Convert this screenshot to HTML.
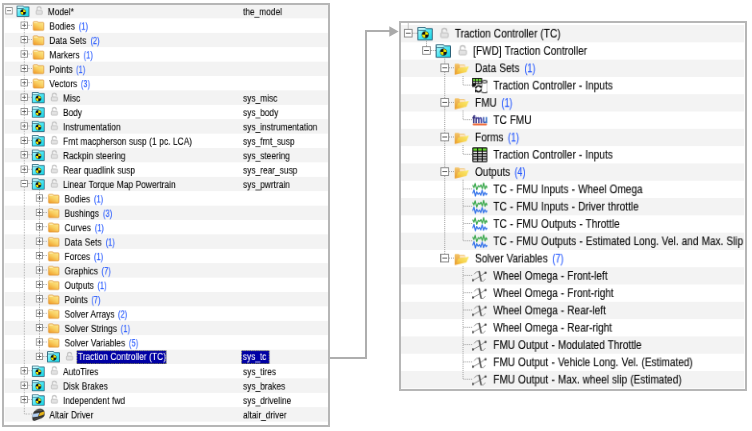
<!DOCTYPE html>
<html><head><meta charset="utf-8"><style>
html,body{margin:0;padding:0;background:#fff;width:752px;height:431px;overflow:hidden;position:relative}
.frame{position:absolute;border:2px solid #b6b6b6;box-sizing:border-box}
.panel{position:absolute;transform-origin:0 0;width:0;height:0;will-change:transform}
.rbg{position:absolute;height:18px;background:#f3f3f3}
.lines{position:absolute;left:0;top:0;overflow:visible}
.lines line{stroke:#9a9a9a;stroke-width:1;stroke-dasharray:1 1}
.box{position:absolute;width:7px;height:7px;border:1px solid #8a8a8a;background:#fff}
.box .h{position:absolute;left:1px;top:3px;width:5px;height:1px;background:#555}
.box .v{position:absolute;left:3px;top:1px;width:1px;height:5px;background:#555}
.icw{position:absolute;width:16px;height:16px}
.ic{display:block}
.tx{position:absolute;height:18px;white-space:nowrap;font-family:"Liberation Sans",sans-serif;font-size:12.2px;line-height:18px;color:#000;-webkit-text-stroke:0.1px #000;-webkit-font-smoothing:antialiased;word-spacing:0.4px}
.tx span{display:inline-block;transform:scaleX(0.857);transform-origin:0 0}
.cnt{color:#2a5cff;-webkit-text-stroke:0.25px #2a5cff;margin-left:1.8px;letter-spacing:0.3px}
.sel span{background:#0000a4;color:#fff;-webkit-text-stroke-color:#fff;outline:1px dotted #b0b040;outline-offset:-1px;padding:0 1px 0 2px;margin-left:-2px;line-height:17.6px;position:relative;top:-1px}
.selv span{padding-right:4px}
</style></head><body>
<svg width="0" height="0" style="position:absolute"><defs><linearGradient id="gcy" x1="0" y1="0" x2="1" y2="1"><stop offset="0" stop-color="#c4fbff"/><stop offset="0.5" stop-color="#50e8f4"/><stop offset="1" stop-color="#14cfe0"/></linearGradient><linearGradient id="gfo" x1="0.8" y1="0" x2="0.2" y2="1"><stop offset="0" stop-color="#fdea90"/><stop offset="0.5" stop-color="#f9d062"/><stop offset="1" stop-color="#f19e2c"/></linearGradient><linearGradient id="gfo2" x1="1" y1="0" x2="0" y2="1"><stop offset="0" stop-color="#fbec70"/><stop offset="0.55" stop-color="#f6d24e"/><stop offset="1" stop-color="#ef9a28"/></linearGradient><linearGradient id="gfb" x1="0" y1="0" x2="0" y2="1"><stop offset="0" stop-color="#f4c468"/><stop offset="1" stop-color="#e49a30"/></linearGradient></defs></svg>
<svg style="position:absolute;left:0;top:0" width="752" height="431"><path d="M330 358H366V31H390" fill="none" stroke="#aeaeae" stroke-width="2"/><path d="M389.3 26.2L398.6 31.5L389.3 36.8Z" fill="#aaaaaa"/></svg>
<div class="panel" style="left:3.2px;top:4px;transform:scale(0.8)">
<div class="rbg" style="top:0px;left:2.25px;width:403.25px"></div>
<div class="rbg" style="top:36px;left:2.25px;width:403.25px"></div>
<div class="rbg" style="top:72px;left:2.25px;width:403.25px"></div>
<div class="rbg" style="top:108px;left:2.25px;width:403.25px"></div>
<div class="rbg" style="top:144px;left:2.25px;width:403.25px"></div>
<div class="rbg" style="top:180px;left:2.25px;width:403.25px"></div>
<div class="rbg" style="top:216px;left:2.25px;width:403.25px"></div>
<div class="rbg" style="top:252px;left:2.25px;width:403.25px"></div>
<div class="rbg" style="top:288px;left:2.25px;width:403.25px"></div>
<div class="rbg" style="top:324px;left:2.25px;width:403.25px"></div>
<div class="rbg" style="top:360px;left:2.25px;width:403.25px"></div>
<div class="rbg" style="top:396px;left:2.25px;width:403.25px"></div>
<div class="rbg" style="top:432px;left:2.25px;width:403.25px"></div>
<div class="rbg" style="top:468px;left:2.25px;width:403.25px"></div>
<div class="rbg" style="top:504px;left:2.25px;width:403.25px"></div>
<svg class="lines" width="420" height="542"><line x1="26.5" y1="17" x2="26.5" y2="512"/><line x1="31" y1="26.5" x2="36" y2="26.5"/><line x1="31" y1="44.5" x2="36" y2="44.5"/><line x1="31" y1="62.5" x2="36" y2="62.5"/><line x1="31" y1="80.5" x2="36" y2="80.5"/><line x1="31" y1="98.5" x2="36" y2="98.5"/><line x1="31" y1="116.5" x2="36" y2="116.5"/><line x1="31" y1="134.5" x2="36" y2="134.5"/><line x1="31" y1="152.5" x2="36" y2="152.5"/><line x1="31" y1="170.5" x2="36" y2="170.5"/><line x1="31" y1="188.5" x2="36" y2="188.5"/><line x1="31" y1="206.5" x2="36" y2="206.5"/><line x1="31" y1="224.5" x2="36" y2="224.5"/><line x1="45.5" y1="233" x2="45.5" y2="440"/><line x1="50" y1="242.5" x2="55" y2="242.5"/><line x1="50" y1="260.5" x2="55" y2="260.5"/><line x1="50" y1="278.5" x2="55" y2="278.5"/><line x1="50" y1="296.5" x2="55" y2="296.5"/><line x1="50" y1="314.5" x2="55" y2="314.5"/><line x1="50" y1="332.5" x2="55" y2="332.5"/><line x1="50" y1="350.5" x2="55" y2="350.5"/><line x1="50" y1="368.5" x2="55" y2="368.5"/><line x1="50" y1="386.5" x2="55" y2="386.5"/><line x1="50" y1="404.5" x2="55" y2="404.5"/><line x1="50" y1="422.5" x2="55" y2="422.5"/><line x1="50" y1="440.5" x2="55" y2="440.5"/><line x1="31" y1="458.5" x2="36" y2="458.5"/><line x1="31" y1="476.5" x2="36" y2="476.5"/><line x1="31" y1="494.5" x2="36" y2="494.5"/><line x1="27" y1="512.5" x2="36" y2="512.5"/></svg>
<div class="box" style="left:3px;top:3.5px"><i class="h"></i></div>
<div class="icw" style="left:17px;top:1px"><svg class="ic" width="16" height="16" viewBox="0 0 16 16"><path d="M0.5 14.6V1.6H8.3L9.3 2.8H15.5V14.6Z" fill="url(#gcy)" stroke="#2a6078" stroke-width="1"/><path d="M1.2 4.5H8.8" stroke="#3a7088" stroke-width="0.9"/><path d="M1.5 2.9H7.8" stroke="#e6ffff" stroke-width="1.1"/><circle cx="8.2" cy="9.1" r="3.6" fill="#151515"/><path d="M8.2 9.1V5.9A3.2 3.2 0 0 1 11.4 9.1Z M8.2 9.1V12.3A3.2 3.2 0 0 1 5 9.1Z" fill="#f6e800"/></svg></div>
<div class="icw" style="left:37px;top:1px"><svg class="ic" width="16" height="16" viewBox="0 0 16 16"><path d="M5.6 7.2V5A2.5 2.5 0 0 1 10.6 5V5.6" fill="none" stroke="#c2c2c2" stroke-width="1.4"/><rect x="4.3" y="7.1" width="7.8" height="4.9" rx="0.9" fill="#e2e2e2" stroke="#c0c0c0" stroke-width="1"/></svg></div>
<div class="tx" style="left:55.7px;top:0.7px"><span>Model*</span></div>
<div class="tx" style="left:300.175px;top:0.7px"><span>the_model</span></div>
<div class="box" style="left:22px;top:21.5px"><i class="h"></i><i class="v"></i></div>
<div class="icw" style="left:36px;top:19px"><svg class="ic" width="16" height="16" viewBox="0 0 16 16"><path d="M1.9 13.1V3.8Q1.9 2.9 2.8 2.9H7.3L8.3 4H14Q14.9 4 14.9 4.9V13.1Q14.9 14 14 14H2.8Q1.9 14 1.9 13.1Z" fill="url(#gfo)" stroke="#e0963a" stroke-width="0.9"/><path d="M2.7 4.2H7.2" stroke="#fff4cc" stroke-width="1"/></svg></div>
<div class="tx" style="left:58.2px;top:18.7px"><span>Bodies <span class="cnt">(1)</span></span></div>
<div class="box" style="left:22px;top:39.5px"><i class="h"></i><i class="v"></i></div>
<div class="icw" style="left:36px;top:37px"><svg class="ic" width="16" height="16" viewBox="0 0 16 16"><path d="M1.9 13.1V3.8Q1.9 2.9 2.8 2.9H7.3L8.3 4H14Q14.9 4 14.9 4.9V13.1Q14.9 14 14 14H2.8Q1.9 14 1.9 13.1Z" fill="url(#gfo)" stroke="#e0963a" stroke-width="0.9"/><path d="M2.7 4.2H7.2" stroke="#fff4cc" stroke-width="1"/></svg></div>
<div class="tx" style="left:58.2px;top:36.7px"><span>Data Sets <span class="cnt">(2)</span></span></div>
<div class="box" style="left:22px;top:57.5px"><i class="h"></i><i class="v"></i></div>
<div class="icw" style="left:36px;top:55px"><svg class="ic" width="16" height="16" viewBox="0 0 16 16"><path d="M1.9 13.1V3.8Q1.9 2.9 2.8 2.9H7.3L8.3 4H14Q14.9 4 14.9 4.9V13.1Q14.9 14 14 14H2.8Q1.9 14 1.9 13.1Z" fill="url(#gfo)" stroke="#e0963a" stroke-width="0.9"/><path d="M2.7 4.2H7.2" stroke="#fff4cc" stroke-width="1"/></svg></div>
<div class="tx" style="left:58.2px;top:54.7px"><span>Markers <span class="cnt">(1)</span></span></div>
<div class="box" style="left:22px;top:75.5px"><i class="h"></i><i class="v"></i></div>
<div class="icw" style="left:36px;top:73px"><svg class="ic" width="16" height="16" viewBox="0 0 16 16"><path d="M1.9 13.1V3.8Q1.9 2.9 2.8 2.9H7.3L8.3 4H14Q14.9 4 14.9 4.9V13.1Q14.9 14 14 14H2.8Q1.9 14 1.9 13.1Z" fill="url(#gfo)" stroke="#e0963a" stroke-width="0.9"/><path d="M2.7 4.2H7.2" stroke="#fff4cc" stroke-width="1"/></svg></div>
<div class="tx" style="left:58.2px;top:72.7px"><span>Points <span class="cnt">(1)</span></span></div>
<div class="box" style="left:22px;top:93.5px"><i class="h"></i><i class="v"></i></div>
<div class="icw" style="left:36px;top:91px"><svg class="ic" width="16" height="16" viewBox="0 0 16 16"><path d="M1.9 13.1V3.8Q1.9 2.9 2.8 2.9H7.3L8.3 4H14Q14.9 4 14.9 4.9V13.1Q14.9 14 14 14H2.8Q1.9 14 1.9 13.1Z" fill="url(#gfo)" stroke="#e0963a" stroke-width="0.9"/><path d="M2.7 4.2H7.2" stroke="#fff4cc" stroke-width="1"/></svg></div>
<div class="tx" style="left:58.2px;top:90.7px"><span>Vectors <span class="cnt">(3)</span></span></div>
<div class="box" style="left:22px;top:111.5px"><i class="h"></i><i class="v"></i></div>
<div class="icw" style="left:36px;top:109px"><svg class="ic" width="16" height="16" viewBox="0 0 16 16"><path d="M0.5 14.6V1.6H8.3L9.3 2.8H15.5V14.6Z" fill="url(#gcy)" stroke="#2a6078" stroke-width="1"/><path d="M1.2 4.5H8.8" stroke="#3a7088" stroke-width="0.9"/><path d="M1.5 2.9H7.8" stroke="#e6ffff" stroke-width="1.1"/><circle cx="8.2" cy="9.1" r="3.6" fill="#151515"/><path d="M8.2 9.1V5.9A3.2 3.2 0 0 1 11.4 9.1Z M8.2 9.1V12.3A3.2 3.2 0 0 1 5 9.1Z" fill="#f6e800"/></svg></div>
<div class="icw" style="left:56px;top:109px"><svg class="ic" width="16" height="16" viewBox="0 0 16 16"><path d="M5.6 7.2V5A2.5 2.5 0 0 1 10.6 5V5.6" fill="none" stroke="#c2c2c2" stroke-width="1.4"/><rect x="4.3" y="7.1" width="7.8" height="4.9" rx="0.9" fill="#e2e2e2" stroke="#c0c0c0" stroke-width="1"/></svg></div>
<div class="tx" style="left:74.7px;top:108.7px"><span>Misc</span></div>
<div class="tx" style="left:300.175px;top:108.7px"><span>sys_misc</span></div>
<div class="box" style="left:22px;top:129.5px"><i class="h"></i><i class="v"></i></div>
<div class="icw" style="left:36px;top:127px"><svg class="ic" width="16" height="16" viewBox="0 0 16 16"><path d="M0.5 14.6V1.6H8.3L9.3 2.8H15.5V14.6Z" fill="url(#gcy)" stroke="#2a6078" stroke-width="1"/><path d="M1.2 4.5H8.8" stroke="#3a7088" stroke-width="0.9"/><path d="M1.5 2.9H7.8" stroke="#e6ffff" stroke-width="1.1"/><circle cx="8.2" cy="9.1" r="3.6" fill="#151515"/><path d="M8.2 9.1V5.9A3.2 3.2 0 0 1 11.4 9.1Z M8.2 9.1V12.3A3.2 3.2 0 0 1 5 9.1Z" fill="#f6e800"/></svg></div>
<div class="icw" style="left:56px;top:127px"><svg class="ic" width="16" height="16" viewBox="0 0 16 16"><path d="M5.6 7.2V5A2.5 2.5 0 0 1 10.6 5V5.6" fill="none" stroke="#c2c2c2" stroke-width="1.4"/><rect x="4.3" y="7.1" width="7.8" height="4.9" rx="0.9" fill="#e2e2e2" stroke="#c0c0c0" stroke-width="1"/></svg></div>
<div class="tx" style="left:74.7px;top:126.7px"><span>Body</span></div>
<div class="tx" style="left:300.175px;top:126.7px"><span>sys_body</span></div>
<div class="box" style="left:22px;top:147.5px"><i class="h"></i><i class="v"></i></div>
<div class="icw" style="left:36px;top:145px"><svg class="ic" width="16" height="16" viewBox="0 0 16 16"><path d="M0.5 14.6V1.6H8.3L9.3 2.8H15.5V14.6Z" fill="url(#gcy)" stroke="#2a6078" stroke-width="1"/><path d="M1.2 4.5H8.8" stroke="#3a7088" stroke-width="0.9"/><path d="M1.5 2.9H7.8" stroke="#e6ffff" stroke-width="1.1"/><circle cx="8.2" cy="9.1" r="3.6" fill="#151515"/><path d="M8.2 9.1V5.9A3.2 3.2 0 0 1 11.4 9.1Z M8.2 9.1V12.3A3.2 3.2 0 0 1 5 9.1Z" fill="#f6e800"/></svg></div>
<div class="icw" style="left:56px;top:145px"><svg class="ic" width="16" height="16" viewBox="0 0 16 16"><path d="M5.6 7.2V5A2.5 2.5 0 0 1 10.6 5V5.6" fill="none" stroke="#c2c2c2" stroke-width="1.4"/><rect x="4.3" y="7.1" width="7.8" height="4.9" rx="0.9" fill="#e2e2e2" stroke="#c0c0c0" stroke-width="1"/></svg></div>
<div class="tx" style="left:74.7px;top:144.7px"><span>Instrumentation</span></div>
<div class="tx" style="left:300.175px;top:144.7px"><span>sys_instrumentation</span></div>
<div class="box" style="left:22px;top:165.5px"><i class="h"></i><i class="v"></i></div>
<div class="icw" style="left:36px;top:163px"><svg class="ic" width="16" height="16" viewBox="0 0 16 16"><path d="M0.5 14.6V1.6H8.3L9.3 2.8H15.5V14.6Z" fill="url(#gcy)" stroke="#2a6078" stroke-width="1"/><path d="M1.2 4.5H8.8" stroke="#3a7088" stroke-width="0.9"/><path d="M1.5 2.9H7.8" stroke="#e6ffff" stroke-width="1.1"/><circle cx="8.2" cy="9.1" r="3.6" fill="#151515"/><path d="M8.2 9.1V5.9A3.2 3.2 0 0 1 11.4 9.1Z M8.2 9.1V12.3A3.2 3.2 0 0 1 5 9.1Z" fill="#f6e800"/></svg></div>
<div class="icw" style="left:56px;top:163px"><svg class="ic" width="16" height="16" viewBox="0 0 16 16"><path d="M5.6 7.2V5A2.5 2.5 0 0 1 10.6 5V5.6" fill="none" stroke="#c2c2c2" stroke-width="1.4"/><rect x="4.3" y="7.1" width="7.8" height="4.9" rx="0.9" fill="#e2e2e2" stroke="#c0c0c0" stroke-width="1"/></svg></div>
<div class="tx" style="left:74.7px;top:162.7px"><span>Frnt macpherson susp (1 pc. LCA)</span></div>
<div class="tx" style="left:300.175px;top:162.7px"><span>sys_frnt_susp</span></div>
<div class="box" style="left:22px;top:183.5px"><i class="h"></i><i class="v"></i></div>
<div class="icw" style="left:36px;top:181px"><svg class="ic" width="16" height="16" viewBox="0 0 16 16"><path d="M0.5 14.6V1.6H8.3L9.3 2.8H15.5V14.6Z" fill="url(#gcy)" stroke="#2a6078" stroke-width="1"/><path d="M1.2 4.5H8.8" stroke="#3a7088" stroke-width="0.9"/><path d="M1.5 2.9H7.8" stroke="#e6ffff" stroke-width="1.1"/><circle cx="8.2" cy="9.1" r="3.6" fill="#151515"/><path d="M8.2 9.1V5.9A3.2 3.2 0 0 1 11.4 9.1Z M8.2 9.1V12.3A3.2 3.2 0 0 1 5 9.1Z" fill="#f6e800"/></svg></div>
<div class="icw" style="left:56px;top:181px"><svg class="ic" width="16" height="16" viewBox="0 0 16 16"><path d="M5.6 7.2V5A2.5 2.5 0 0 1 10.6 5V5.6" fill="none" stroke="#c2c2c2" stroke-width="1.4"/><rect x="4.3" y="7.1" width="7.8" height="4.9" rx="0.9" fill="#e2e2e2" stroke="#c0c0c0" stroke-width="1"/></svg></div>
<div class="tx" style="left:74.7px;top:180.7px"><span>Rackpin steering</span></div>
<div class="tx" style="left:300.175px;top:180.7px"><span>sys_steering</span></div>
<div class="box" style="left:22px;top:201.5px"><i class="h"></i><i class="v"></i></div>
<div class="icw" style="left:36px;top:199px"><svg class="ic" width="16" height="16" viewBox="0 0 16 16"><path d="M0.5 14.6V1.6H8.3L9.3 2.8H15.5V14.6Z" fill="url(#gcy)" stroke="#2a6078" stroke-width="1"/><path d="M1.2 4.5H8.8" stroke="#3a7088" stroke-width="0.9"/><path d="M1.5 2.9H7.8" stroke="#e6ffff" stroke-width="1.1"/><circle cx="8.2" cy="9.1" r="3.6" fill="#151515"/><path d="M8.2 9.1V5.9A3.2 3.2 0 0 1 11.4 9.1Z M8.2 9.1V12.3A3.2 3.2 0 0 1 5 9.1Z" fill="#f6e800"/></svg></div>
<div class="icw" style="left:56px;top:199px"><svg class="ic" width="16" height="16" viewBox="0 0 16 16"><path d="M5.6 7.2V5A2.5 2.5 0 0 1 10.6 5V5.6" fill="none" stroke="#c2c2c2" stroke-width="1.4"/><rect x="4.3" y="7.1" width="7.8" height="4.9" rx="0.9" fill="#e2e2e2" stroke="#c0c0c0" stroke-width="1"/></svg></div>
<div class="tx" style="left:74.7px;top:198.7px"><span>Rear quadlink susp</span></div>
<div class="tx" style="left:300.175px;top:198.7px"><span>sys_rear_susp</span></div>
<div class="box" style="left:22px;top:219.5px"><i class="h"></i></div>
<div class="icw" style="left:36px;top:217px"><svg class="ic" width="16" height="16" viewBox="0 0 16 16"><path d="M0.5 14.6V1.6H8.3L9.3 2.8H15.5V14.6Z" fill="url(#gcy)" stroke="#2a6078" stroke-width="1"/><path d="M1.2 4.5H8.8" stroke="#3a7088" stroke-width="0.9"/><path d="M1.5 2.9H7.8" stroke="#e6ffff" stroke-width="1.1"/><circle cx="8.2" cy="9.1" r="3.6" fill="#151515"/><path d="M8.2 9.1V5.9A3.2 3.2 0 0 1 11.4 9.1Z M8.2 9.1V12.3A3.2 3.2 0 0 1 5 9.1Z" fill="#f6e800"/></svg></div>
<div class="icw" style="left:56px;top:217px"><svg class="ic" width="16" height="16" viewBox="0 0 16 16"><path d="M5.6 7.2V5A2.5 2.5 0 0 1 10.6 5V5.6" fill="none" stroke="#c2c2c2" stroke-width="1.4"/><rect x="4.3" y="7.1" width="7.8" height="4.9" rx="0.9" fill="#e2e2e2" stroke="#c0c0c0" stroke-width="1"/></svg></div>
<div class="tx" style="left:74.7px;top:216.7px"><span>Linear Torque Map Powertrain</span></div>
<div class="tx" style="left:300.175px;top:216.7px"><span>sys_pwrtrain</span></div>
<div class="box" style="left:41px;top:237.5px"><i class="h"></i><i class="v"></i></div>
<div class="icw" style="left:55px;top:235px"><svg class="ic" width="16" height="16" viewBox="0 0 16 16"><path d="M1.9 13.1V3.8Q1.9 2.9 2.8 2.9H7.3L8.3 4H14Q14.9 4 14.9 4.9V13.1Q14.9 14 14 14H2.8Q1.9 14 1.9 13.1Z" fill="url(#gfo)" stroke="#e0963a" stroke-width="0.9"/><path d="M2.7 4.2H7.2" stroke="#fff4cc" stroke-width="1"/></svg></div>
<div class="tx" style="left:77.2px;top:234.7px"><span>Bodies <span class="cnt">(1)</span></span></div>
<div class="box" style="left:41px;top:255.5px"><i class="h"></i><i class="v"></i></div>
<div class="icw" style="left:55px;top:253px"><svg class="ic" width="16" height="16" viewBox="0 0 16 16"><path d="M1.9 13.1V3.8Q1.9 2.9 2.8 2.9H7.3L8.3 4H14Q14.9 4 14.9 4.9V13.1Q14.9 14 14 14H2.8Q1.9 14 1.9 13.1Z" fill="url(#gfo)" stroke="#e0963a" stroke-width="0.9"/><path d="M2.7 4.2H7.2" stroke="#fff4cc" stroke-width="1"/></svg></div>
<div class="tx" style="left:77.2px;top:252.7px"><span>Bushings <span class="cnt">(3)</span></span></div>
<div class="box" style="left:41px;top:273.5px"><i class="h"></i><i class="v"></i></div>
<div class="icw" style="left:55px;top:271px"><svg class="ic" width="16" height="16" viewBox="0 0 16 16"><path d="M1.9 13.1V3.8Q1.9 2.9 2.8 2.9H7.3L8.3 4H14Q14.9 4 14.9 4.9V13.1Q14.9 14 14 14H2.8Q1.9 14 1.9 13.1Z" fill="url(#gfo)" stroke="#e0963a" stroke-width="0.9"/><path d="M2.7 4.2H7.2" stroke="#fff4cc" stroke-width="1"/></svg></div>
<div class="tx" style="left:77.2px;top:270.7px"><span>Curves <span class="cnt">(1)</span></span></div>
<div class="box" style="left:41px;top:291.5px"><i class="h"></i><i class="v"></i></div>
<div class="icw" style="left:55px;top:289px"><svg class="ic" width="16" height="16" viewBox="0 0 16 16"><path d="M1.9 13.1V3.8Q1.9 2.9 2.8 2.9H7.3L8.3 4H14Q14.9 4 14.9 4.9V13.1Q14.9 14 14 14H2.8Q1.9 14 1.9 13.1Z" fill="url(#gfo)" stroke="#e0963a" stroke-width="0.9"/><path d="M2.7 4.2H7.2" stroke="#fff4cc" stroke-width="1"/></svg></div>
<div class="tx" style="left:77.2px;top:288.7px"><span>Data Sets <span class="cnt">(1)</span></span></div>
<div class="box" style="left:41px;top:309.5px"><i class="h"></i><i class="v"></i></div>
<div class="icw" style="left:55px;top:307px"><svg class="ic" width="16" height="16" viewBox="0 0 16 16"><path d="M1.9 13.1V3.8Q1.9 2.9 2.8 2.9H7.3L8.3 4H14Q14.9 4 14.9 4.9V13.1Q14.9 14 14 14H2.8Q1.9 14 1.9 13.1Z" fill="url(#gfo)" stroke="#e0963a" stroke-width="0.9"/><path d="M2.7 4.2H7.2" stroke="#fff4cc" stroke-width="1"/></svg></div>
<div class="tx" style="left:77.2px;top:306.7px"><span>Forces <span class="cnt">(1)</span></span></div>
<div class="box" style="left:41px;top:327.5px"><i class="h"></i><i class="v"></i></div>
<div class="icw" style="left:55px;top:325px"><svg class="ic" width="16" height="16" viewBox="0 0 16 16"><path d="M1.9 13.1V3.8Q1.9 2.9 2.8 2.9H7.3L8.3 4H14Q14.9 4 14.9 4.9V13.1Q14.9 14 14 14H2.8Q1.9 14 1.9 13.1Z" fill="url(#gfo)" stroke="#e0963a" stroke-width="0.9"/><path d="M2.7 4.2H7.2" stroke="#fff4cc" stroke-width="1"/></svg></div>
<div class="tx" style="left:77.2px;top:324.7px"><span>Graphics <span class="cnt">(7)</span></span></div>
<div class="box" style="left:41px;top:345.5px"><i class="h"></i><i class="v"></i></div>
<div class="icw" style="left:55px;top:343px"><svg class="ic" width="16" height="16" viewBox="0 0 16 16"><path d="M1.9 13.1V3.8Q1.9 2.9 2.8 2.9H7.3L8.3 4H14Q14.9 4 14.9 4.9V13.1Q14.9 14 14 14H2.8Q1.9 14 1.9 13.1Z" fill="url(#gfo)" stroke="#e0963a" stroke-width="0.9"/><path d="M2.7 4.2H7.2" stroke="#fff4cc" stroke-width="1"/></svg></div>
<div class="tx" style="left:77.2px;top:342.7px"><span>Outputs <span class="cnt">(1)</span></span></div>
<div class="box" style="left:41px;top:363.5px"><i class="h"></i><i class="v"></i></div>
<div class="icw" style="left:55px;top:361px"><svg class="ic" width="16" height="16" viewBox="0 0 16 16"><path d="M1.9 13.1V3.8Q1.9 2.9 2.8 2.9H7.3L8.3 4H14Q14.9 4 14.9 4.9V13.1Q14.9 14 14 14H2.8Q1.9 14 1.9 13.1Z" fill="url(#gfo)" stroke="#e0963a" stroke-width="0.9"/><path d="M2.7 4.2H7.2" stroke="#fff4cc" stroke-width="1"/></svg></div>
<div class="tx" style="left:77.2px;top:360.7px"><span>Points <span class="cnt">(7)</span></span></div>
<div class="box" style="left:41px;top:381.5px"><i class="h"></i><i class="v"></i></div>
<div class="icw" style="left:55px;top:379px"><svg class="ic" width="16" height="16" viewBox="0 0 16 16"><path d="M1.9 13.1V3.8Q1.9 2.9 2.8 2.9H7.3L8.3 4H14Q14.9 4 14.9 4.9V13.1Q14.9 14 14 14H2.8Q1.9 14 1.9 13.1Z" fill="url(#gfo)" stroke="#e0963a" stroke-width="0.9"/><path d="M2.7 4.2H7.2" stroke="#fff4cc" stroke-width="1"/></svg></div>
<div class="tx" style="left:77.2px;top:378.7px"><span>Solver Arrays <span class="cnt">(2)</span></span></div>
<div class="box" style="left:41px;top:399.5px"><i class="h"></i><i class="v"></i></div>
<div class="icw" style="left:55px;top:397px"><svg class="ic" width="16" height="16" viewBox="0 0 16 16"><path d="M1.9 13.1V3.8Q1.9 2.9 2.8 2.9H7.3L8.3 4H14Q14.9 4 14.9 4.9V13.1Q14.9 14 14 14H2.8Q1.9 14 1.9 13.1Z" fill="url(#gfo)" stroke="#e0963a" stroke-width="0.9"/><path d="M2.7 4.2H7.2" stroke="#fff4cc" stroke-width="1"/></svg></div>
<div class="tx" style="left:77.2px;top:396.7px"><span>Solver Strings <span class="cnt">(1)</span></span></div>
<div class="box" style="left:41px;top:417.5px"><i class="h"></i><i class="v"></i></div>
<div class="icw" style="left:55px;top:415px"><svg class="ic" width="16" height="16" viewBox="0 0 16 16"><path d="M1.9 13.1V3.8Q1.9 2.9 2.8 2.9H7.3L8.3 4H14Q14.9 4 14.9 4.9V13.1Q14.9 14 14 14H2.8Q1.9 14 1.9 13.1Z" fill="url(#gfo)" stroke="#e0963a" stroke-width="0.9"/><path d="M2.7 4.2H7.2" stroke="#fff4cc" stroke-width="1"/></svg></div>
<div class="tx" style="left:77.2px;top:414.7px"><span>Solver Variables <span class="cnt">(5)</span></span></div>
<div class="box" style="left:41px;top:435.5px"><i class="h"></i><i class="v"></i></div>
<div class="icw" style="left:55px;top:433px"><svg class="ic" width="16" height="16" viewBox="0 0 16 16"><path d="M0.5 14.6V1.6H8.3L9.3 2.8H15.5V14.6Z" fill="url(#gcy)" stroke="#2a6078" stroke-width="1"/><path d="M1.2 4.5H8.8" stroke="#3a7088" stroke-width="0.9"/><path d="M1.5 2.9H7.8" stroke="#e6ffff" stroke-width="1.1"/><circle cx="8.2" cy="9.1" r="3.6" fill="#151515"/><path d="M8.2 9.1V5.9A3.2 3.2 0 0 1 11.4 9.1Z M8.2 9.1V12.3A3.2 3.2 0 0 1 5 9.1Z" fill="#f6e800"/></svg></div>
<div class="icw" style="left:75px;top:433px"><svg class="ic" width="16" height="16" viewBox="0 0 16 16"><path d="M5.6 7.2V5A2.5 2.5 0 0 1 10.6 5V5.6" fill="none" stroke="#c2c2c2" stroke-width="1.4"/><rect x="4.3" y="7.1" width="7.8" height="4.9" rx="0.9" fill="#e2e2e2" stroke="#c0c0c0" stroke-width="1"/></svg></div>
<div class="tx sel" style="left:93.7px;top:432.7px"><span>Traction Controller (TC)</span></div>
<div class="tx sel selv" style="left:300.175px;top:432.7px"><span>sys_tc</span></div>
<div class="box" style="left:22px;top:453.5px"><i class="h"></i><i class="v"></i></div>
<div class="icw" style="left:36px;top:451px"><svg class="ic" width="16" height="16" viewBox="0 0 16 16"><path d="M0.5 14.6V1.6H8.3L9.3 2.8H15.5V14.6Z" fill="url(#gcy)" stroke="#2a6078" stroke-width="1"/><path d="M1.2 4.5H8.8" stroke="#3a7088" stroke-width="0.9"/><path d="M1.5 2.9H7.8" stroke="#e6ffff" stroke-width="1.1"/><circle cx="8.2" cy="9.1" r="3.6" fill="#151515"/><path d="M8.2 9.1V5.9A3.2 3.2 0 0 1 11.4 9.1Z M8.2 9.1V12.3A3.2 3.2 0 0 1 5 9.1Z" fill="#f6e800"/></svg></div>
<div class="icw" style="left:56px;top:451px"><svg class="ic" width="16" height="16" viewBox="0 0 16 16"><path d="M5.6 7.2V5A2.5 2.5 0 0 1 10.6 5V5.6" fill="none" stroke="#c2c2c2" stroke-width="1.4"/><rect x="4.3" y="7.1" width="7.8" height="4.9" rx="0.9" fill="#e2e2e2" stroke="#c0c0c0" stroke-width="1"/></svg></div>
<div class="tx" style="left:74.7px;top:450.7px"><span>AutoTires</span></div>
<div class="tx" style="left:300.175px;top:450.7px"><span>sys_tires</span></div>
<div class="box" style="left:22px;top:471.5px"><i class="h"></i><i class="v"></i></div>
<div class="icw" style="left:36px;top:469px"><svg class="ic" width="16" height="16" viewBox="0 0 16 16"><path d="M0.5 14.6V1.6H8.3L9.3 2.8H15.5V14.6Z" fill="url(#gcy)" stroke="#2a6078" stroke-width="1"/><path d="M1.2 4.5H8.8" stroke="#3a7088" stroke-width="0.9"/><path d="M1.5 2.9H7.8" stroke="#e6ffff" stroke-width="1.1"/><circle cx="8.2" cy="9.1" r="3.6" fill="#151515"/><path d="M8.2 9.1V5.9A3.2 3.2 0 0 1 11.4 9.1Z M8.2 9.1V12.3A3.2 3.2 0 0 1 5 9.1Z" fill="#f6e800"/></svg></div>
<div class="icw" style="left:56px;top:469px"><svg class="ic" width="16" height="16" viewBox="0 0 16 16"><path d="M5.6 7.2V5A2.5 2.5 0 0 1 10.6 5V5.6" fill="none" stroke="#c2c2c2" stroke-width="1.4"/><rect x="4.3" y="7.1" width="7.8" height="4.9" rx="0.9" fill="#e2e2e2" stroke="#c0c0c0" stroke-width="1"/></svg></div>
<div class="tx" style="left:74.7px;top:468.7px"><span>Disk Brakes</span></div>
<div class="tx" style="left:300.175px;top:468.7px"><span>sys_brakes</span></div>
<div class="box" style="left:22px;top:489.5px"><i class="h"></i><i class="v"></i></div>
<div class="icw" style="left:36px;top:487px"><svg class="ic" width="16" height="16" viewBox="0 0 16 16"><path d="M0.5 14.6V1.6H8.3L9.3 2.8H15.5V14.6Z" fill="url(#gcy)" stroke="#2a6078" stroke-width="1"/><path d="M1.2 4.5H8.8" stroke="#3a7088" stroke-width="0.9"/><path d="M1.5 2.9H7.8" stroke="#e6ffff" stroke-width="1.1"/><circle cx="8.2" cy="9.1" r="3.6" fill="#151515"/><path d="M8.2 9.1V5.9A3.2 3.2 0 0 1 11.4 9.1Z M8.2 9.1V12.3A3.2 3.2 0 0 1 5 9.1Z" fill="#f6e800"/></svg></div>
<div class="icw" style="left:56px;top:487px"><svg class="ic" width="16" height="16" viewBox="0 0 16 16"><path d="M5.6 7.2V5A2.5 2.5 0 0 1 10.6 5V5.6" fill="none" stroke="#c2c2c2" stroke-width="1.4"/><rect x="4.3" y="7.1" width="7.8" height="4.9" rx="0.9" fill="#e2e2e2" stroke="#c0c0c0" stroke-width="1"/></svg></div>
<div class="tx" style="left:74.7px;top:486.7px"><span>Independent fwd</span></div>
<div class="tx" style="left:300.175px;top:486.7px"><span>sys_driveline</span></div>
<div class="icw" style="left:36px;top:505px"><svg class="ic" width="16" height="16" viewBox="0 0 16 16"><path d="M1 15Q-0.5 9 2.5 5Q6 0.3 11 0.8Q16.2 1.8 16.3 7.5Q16 11.5 12 13L4.2 15.8Q2 16.3 1 15Z" fill="#333"/><path d="M1.2 7.4L9.4 6L7.8 10.8L0.8 11.6Z" fill="#b4d0f2"/><path d="M8.4 10.2L10.2 6Q13.2 5 15.7 4.6L15.1 8.3Q12 9.6 8.4 10.2Z" fill="#e6b41a"/><path d="M4 3.4Q8 1.6 12.6 2.8" fill="none" stroke="#9a9a9a" stroke-width="0.8"/><path d="M3 14.2L12 11.6" fill="none" stroke="#6a6a6a" stroke-width="0.6"/></svg></div>
<div class="tx" style="left:58.2px;top:504.7px"><span>Altair Driver</span></div>
<div class="tx" style="left:300.175px;top:504.7px"><span>altair_driver</span></div>
</div>
<div class="panel" style="left:401px;top:24.6px;transform:scale(0.9611)">
<div class="rbg" style="top:0px;left:0px;width:357.403px"></div>
<div class="rbg" style="top:36px;left:0px;width:357.403px"></div>
<div class="rbg" style="top:72px;left:0px;width:357.403px"></div>
<div class="rbg" style="top:108px;left:0px;width:357.403px"></div>
<div class="rbg" style="top:144px;left:0px;width:357.403px"></div>
<div class="rbg" style="top:180px;left:0px;width:357.403px"></div>
<div class="rbg" style="top:216px;left:0px;width:357.403px"></div>
<div class="rbg" style="top:252px;left:0px;width:357.403px"></div>
<div class="rbg" style="top:288px;left:0px;width:357.403px"></div>
<div class="rbg" style="top:324px;left:0px;width:357.403px"></div>
<div class="rbg" style="top:360px;left:0px;width:357.403px"></div>
<svg class="lines" width="360" height="398"><line x1="12" y1="8.5" x2="17" y2="8.5"/><line x1="26.5" y1="17" x2="26.5" y2="26"/><line x1="31" y1="26.5" x2="36" y2="26.5"/><line x1="45.5" y1="35" x2="45.5" y2="242"/><line x1="50" y1="44.5" x2="55" y2="44.5"/><line x1="64.5" y1="53" x2="64.5" y2="62"/><line x1="65" y1="62.5" x2="74" y2="62.5"/><line x1="50" y1="80.5" x2="55" y2="80.5"/><line x1="64.5" y1="89" x2="64.5" y2="98"/><line x1="65" y1="98.5" x2="74" y2="98.5"/><line x1="50" y1="116.5" x2="55" y2="116.5"/><line x1="64.5" y1="125" x2="64.5" y2="134"/><line x1="65" y1="134.5" x2="74" y2="134.5"/><line x1="50" y1="152.5" x2="55" y2="152.5"/><line x1="64.5" y1="161" x2="64.5" y2="224"/><line x1="65" y1="170.5" x2="74" y2="170.5"/><line x1="65" y1="188.5" x2="74" y2="188.5"/><line x1="65" y1="206.5" x2="74" y2="206.5"/><line x1="65" y1="224.5" x2="74" y2="224.5"/><line x1="50" y1="242.5" x2="55" y2="242.5"/><line x1="64.5" y1="251" x2="64.5" y2="368"/><line x1="65" y1="260.5" x2="74" y2="260.5"/><line x1="65" y1="278.5" x2="74" y2="278.5"/><line x1="65" y1="296.5" x2="74" y2="296.5"/><line x1="65" y1="314.5" x2="74" y2="314.5"/><line x1="65" y1="332.5" x2="74" y2="332.5"/><line x1="65" y1="350.5" x2="74" y2="350.5"/><line x1="65" y1="368.5" x2="74" y2="368.5"/><line x1="7.5" y1="-2" x2="7.5" y2="4" style="stroke-dasharray:none;stroke:#c4c4c4"/></svg>
<div class="box" style="left:3px;top:3.5px"><i class="h"></i></div>
<div class="icw" style="left:17px;top:1px"><svg class="ic" width="16" height="16" viewBox="0 0 16 16"><path d="M0.5 14.6V1.6H8.3L9.3 2.8H15.5V14.6Z" fill="url(#gcy)" stroke="#2a6078" stroke-width="1"/><path d="M1.2 4.5H8.8" stroke="#3a7088" stroke-width="0.9"/><path d="M1.5 2.9H7.8" stroke="#e6ffff" stroke-width="1.1"/><circle cx="8.2" cy="9.1" r="3.6" fill="#151515"/><path d="M8.2 9.1V5.9A3.2 3.2 0 0 1 11.4 9.1Z M8.2 9.1V12.3A3.2 3.2 0 0 1 5 9.1Z" fill="#f6e800"/></svg></div>
<div class="icw" style="left:37px;top:1px"><svg class="ic" width="16" height="16" viewBox="0 0 16 16"><path d="M5.6 7.2V5A2.5 2.5 0 0 1 10.6 5V5.6" fill="none" stroke="#c2c2c2" stroke-width="1.4"/><rect x="4.3" y="7.1" width="7.8" height="4.9" rx="0.9" fill="#e2e2e2" stroke="#c0c0c0" stroke-width="1"/></svg></div>
<div class="tx" style="left:55.7px;top:-0.3px"><span>Traction Controller (TC)</span></div>
<div class="box" style="left:22px;top:21.5px"><i class="h"></i></div>
<div class="icw" style="left:36px;top:19px"><svg class="ic" width="16" height="16" viewBox="0 0 16 16"><path d="M0.5 14.6V1.6H8.3L9.3 2.8H15.5V14.6Z" fill="url(#gcy)" stroke="#2a6078" stroke-width="1"/><path d="M1.2 4.5H8.8" stroke="#3a7088" stroke-width="0.9"/><path d="M1.5 2.9H7.8" stroke="#e6ffff" stroke-width="1.1"/><circle cx="8.2" cy="9.1" r="3.6" fill="#151515"/><path d="M8.2 9.1V5.9A3.2 3.2 0 0 1 11.4 9.1Z M8.2 9.1V12.3A3.2 3.2 0 0 1 5 9.1Z" fill="#f6e800"/></svg></div>
<div class="icw" style="left:56px;top:19px"><svg class="ic" width="16" height="16" viewBox="0 0 16 16"><path d="M5.6 7.2V5A2.5 2.5 0 0 1 10.6 5V5.6" fill="none" stroke="#c2c2c2" stroke-width="1.4"/><rect x="4.3" y="7.1" width="7.8" height="4.9" rx="0.9" fill="#e2e2e2" stroke="#c0c0c0" stroke-width="1"/></svg></div>
<div class="tx" style="left:74.7px;top:17.7px"><span>[FWD] Traction Controller</span></div>
<div class="box" style="left:41px;top:39.5px"><i class="h"></i></div>
<div class="icw" style="left:55px;top:37px"><svg class="ic" width="16" height="16" viewBox="0 0 16 16"><path d="M0.8 14.7V4.2Q0.8 3.3 1.7 3.3H5L6 4.3H11.4V9Z" fill="url(#gfb)"/><path d="M6.2 4.9H10.9L11.3 7.6H6Z" fill="#fde4bc"/><path d="M4.6 7.9L15.6 6.1L13.1 11.9L1.2 14.8Z" fill="url(#gfo2)"/></svg></div>
<div class="tx" style="left:77.2px;top:35.7px"><span>Data Sets <span class="cnt">(1)</span></span></div>
<div class="icw" style="left:74px;top:55px"><svg class="ic" width="16" height="16" viewBox="0 0 16 16"><path d="M9.4 3.4Q13 1.8 16.3 3.4V14.8Q13 16.6 9.4 14.8Z" fill="#fff" stroke="#1a1a1a" stroke-width="1"/><path d="M9.4 4.5Q13 6 16.3 4.5" fill="none" stroke="#1a1a1a" stroke-width="0.9"/><rect x="0" y="0" width="10.4" height="9.4" fill="#151515"/><rect x="1" y="1.1" width="2.3" height="2.1" fill="#74e33c"/><rect x="4" y="1.1" width="2.3" height="2.1" fill="#74e33c"/><rect x="7" y="1.1" width="2.3" height="2.1" fill="#74e33c"/><rect x="1" y="4" width="2.3" height="1.2" fill="#e0e0e0"/><rect x="4" y="4" width="2.3" height="1.2" fill="#e0e0e0"/><rect x="7" y="4" width="2.3" height="1.2" fill="#e0e0e0"/><rect x="4" y="6.4" width="6.4" height="3" fill="#fff"/><circle cx="6.6" cy="11.4" r="4.3" fill="#fff"/><path d="M3.6 11.2A3 3 0 0 1 8.9 9.4" fill="none" stroke="#111" stroke-width="1.5"/><path d="M9.6 11.6A3 3 0 0 1 4.3 13.4" fill="none" stroke="#111" stroke-width="1.5"/><path d="M10.2 7.6V10.8L7.4 9.7Z M3 15.2V12L5.8 13.1Z" fill="#111"/></svg></div>
<div class="tx" style="left:96.2px;top:53.7px"><span>Traction Controller - Inputs</span></div>
<div class="box" style="left:41px;top:75.5px"><i class="h"></i></div>
<div class="icw" style="left:55px;top:73px"><svg class="ic" width="16" height="16" viewBox="0 0 16 16"><path d="M0.8 14.7V4.2Q0.8 3.3 1.7 3.3H5L6 4.3H11.4V9Z" fill="url(#gfb)"/><path d="M6.2 4.9H10.9L11.3 7.6H6Z" fill="#fde4bc"/><path d="M4.6 7.9L15.6 6.1L13.1 11.9L1.2 14.8Z" fill="url(#gfo2)"/></svg></div>
<div class="tx" style="left:77.2px;top:71.7px"><span>FMU <span class="cnt">(1)</span></span></div>
<div class="icw" style="left:74px;top:91px"><svg class="ic" width="16" height="16" viewBox="0 0 16 16"><defs><linearGradient id="gfm" x1="0" y1="0" x2="1" y2="0"><stop offset="0" stop-color="#2a2470"/><stop offset="0.6" stop-color="#3a3aa0"/><stop offset="1" stop-color="#1e70c8"/></linearGradient></defs><text x="0.2" y="11.2" font-family="Liberation Sans" font-weight="bold" font-size="11.5" fill="url(#gfm)" stroke="url(#gfm)" stroke-width="0.35" textLength="15.8" lengthAdjust="spacingAndGlyphs">fmu</text><rect x="0.6" y="11.5" width="14.8" height="2" rx="0.7" fill="#f07040"/></svg></div>
<div class="tx" style="left:96.2px;top:89.7px"><span>TC FMU</span></div>
<div class="box" style="left:41px;top:111.5px"><i class="h"></i></div>
<div class="icw" style="left:55px;top:109px"><svg class="ic" width="16" height="16" viewBox="0 0 16 16"><path d="M0.8 14.7V4.2Q0.8 3.3 1.7 3.3H5L6 4.3H11.4V9Z" fill="url(#gfb)"/><path d="M6.2 4.9H10.9L11.3 7.6H6Z" fill="#fde4bc"/><path d="M4.6 7.9L15.6 6.1L13.1 11.9L1.2 14.8Z" fill="url(#gfo2)"/></svg></div>
<div class="tx" style="left:77.2px;top:107.7px"><span>Forms <span class="cnt">(1)</span></span></div>
<div class="icw" style="left:74px;top:127px"><svg class="ic" width="16" height="16" viewBox="0 0 16 16"><rect x="0.2" y="0.3" width="15.6" height="15.4" rx="0.9" fill="#0a0a0a"/><rect x="1.3" y="1.4" width="3.8" height="2.3" fill="#66d92e"/><rect x="1.3" y="4.7" width="3.8" height="1.4" fill="#fff"/><rect x="1.3" y="7.5" width="3.8" height="1.4" fill="#fff"/><rect x="1.3" y="10.3" width="3.8" height="1.4" fill="#fff"/><rect x="1.3" y="13.1" width="3.8" height="1.4" fill="#fff"/><rect x="6.2" y="1.4" width="3.8" height="2.3" fill="#66d92e"/><rect x="6.2" y="4.7" width="3.8" height="1.4" fill="#fff"/><rect x="6.2" y="7.5" width="3.8" height="1.4" fill="#fff"/><rect x="6.2" y="10.3" width="3.8" height="1.4" fill="#fff"/><rect x="6.2" y="13.1" width="3.8" height="1.4" fill="#fff"/><rect x="11.0" y="1.4" width="3.8" height="2.3" fill="#66d92e"/><rect x="11.0" y="4.7" width="3.8" height="1.4" fill="#fff"/><rect x="11.0" y="7.5" width="3.8" height="1.4" fill="#fff"/><rect x="11.0" y="10.3" width="3.8" height="1.4" fill="#fff"/><rect x="11.0" y="13.1" width="3.8" height="1.4" fill="#fff"/></svg></div>
<div class="tx" style="left:96.2px;top:125.7px"><span>Traction Controller - Inputs</span></div>
<div class="box" style="left:41px;top:147.5px"><i class="h"></i></div>
<div class="icw" style="left:55px;top:145px"><svg class="ic" width="16" height="16" viewBox="0 0 16 16"><path d="M0.8 14.7V4.2Q0.8 3.3 1.7 3.3H5L6 4.3H11.4V9Z" fill="url(#gfb)"/><path d="M6.2 4.9H10.9L11.3 7.6H6Z" fill="#fde4bc"/><path d="M4.6 7.9L15.6 6.1L13.1 11.9L1.2 14.8Z" fill="url(#gfo2)"/></svg></div>
<div class="tx" style="left:77.2px;top:143.7px"><span>Outputs <span class="cnt">(4)</span></span></div>
<div class="icw" style="left:74px;top:163px"><svg class="ic" width="16" height="16" viewBox="0 0 16 16"><path d="M0.6 3.6L1.9 6.2L3.1 1.8L4.8 8.4L6.4 4.2L7.8 5.4L9.2 3.4L10.6 7.2L11.9 1.4L13.4 7.6L14.6 4.2L15.6 6.4" fill="none" stroke="#3aa84c" stroke-width="1.2" stroke-linejoin="round"/><path d="M0.6 12.4L1.9 8.4L3.4 15L4.7 10.6L6.2 13.2L7.6 11.6L9 14.2L10.4 8.8L11.8 14.6L13.2 11L14.6 13.8L15.6 12" fill="none" stroke="#3574ea" stroke-width="1.2" stroke-linejoin="round"/></svg></div>
<div class="tx" style="left:96.2px;top:161.7px"><span>TC - FMU Inputs - Wheel Omega</span></div>
<div class="icw" style="left:74px;top:181px"><svg class="ic" width="16" height="16" viewBox="0 0 16 16"><path d="M0.6 3.6L1.9 6.2L3.1 1.8L4.8 8.4L6.4 4.2L7.8 5.4L9.2 3.4L10.6 7.2L11.9 1.4L13.4 7.6L14.6 4.2L15.6 6.4" fill="none" stroke="#3aa84c" stroke-width="1.2" stroke-linejoin="round"/><path d="M0.6 12.4L1.9 8.4L3.4 15L4.7 10.6L6.2 13.2L7.6 11.6L9 14.2L10.4 8.8L11.8 14.6L13.2 11L14.6 13.8L15.6 12" fill="none" stroke="#3574ea" stroke-width="1.2" stroke-linejoin="round"/></svg></div>
<div class="tx" style="left:96.2px;top:179.7px"><span>TC - FMU Inputs - Driver throttle</span></div>
<div class="icw" style="left:74px;top:199px"><svg class="ic" width="16" height="16" viewBox="0 0 16 16"><path d="M0.6 3.6L1.9 6.2L3.1 1.8L4.8 8.4L6.4 4.2L7.8 5.4L9.2 3.4L10.6 7.2L11.9 1.4L13.4 7.6L14.6 4.2L15.6 6.4" fill="none" stroke="#3aa84c" stroke-width="1.2" stroke-linejoin="round"/><path d="M0.6 12.4L1.9 8.4L3.4 15L4.7 10.6L6.2 13.2L7.6 11.6L9 14.2L10.4 8.8L11.8 14.6L13.2 11L14.6 13.8L15.6 12" fill="none" stroke="#3574ea" stroke-width="1.2" stroke-linejoin="round"/></svg></div>
<div class="tx" style="left:96.2px;top:197.7px"><span>TC - FMU Outputs - Throttle</span></div>
<div class="icw" style="left:74px;top:217px"><svg class="ic" width="16" height="16" viewBox="0 0 16 16"><path d="M0.6 3.6L1.9 6.2L3.1 1.8L4.8 8.4L6.4 4.2L7.8 5.4L9.2 3.4L10.6 7.2L11.9 1.4L13.4 7.6L14.6 4.2L15.6 6.4" fill="none" stroke="#3aa84c" stroke-width="1.2" stroke-linejoin="round"/><path d="M0.6 12.4L1.9 8.4L3.4 15L4.7 10.6L6.2 13.2L7.6 11.6L9 14.2L10.4 8.8L11.8 14.6L13.2 11L14.6 13.8L15.6 12" fill="none" stroke="#3574ea" stroke-width="1.2" stroke-linejoin="round"/></svg></div>
<div class="tx" style="left:96.2px;top:215.7px"><span>TC - FMU Outputs - Estimated Long. Vel. and Max. Slip</span></div>
<div class="box" style="left:41px;top:237.5px"><i class="h"></i></div>
<div class="icw" style="left:55px;top:235px"><svg class="ic" width="16" height="16" viewBox="0 0 16 16"><path d="M0.8 14.7V4.2Q0.8 3.3 1.7 3.3H5L6 4.3H11.4V9Z" fill="url(#gfb)"/><path d="M6.2 4.9H10.9L11.3 7.6H6Z" fill="#fde4bc"/><path d="M4.6 7.9L15.6 6.1L13.1 11.9L1.2 14.8Z" fill="url(#gfo2)"/></svg></div>
<div class="tx" style="left:77.2px;top:233.7px"><span>Solver Variables <span class="cnt">(7)</span></span></div>
<div class="icw" style="left:74px;top:253px"><svg class="ic" width="16" height="16" viewBox="0 0 16 16"><g transform="translate(7.5 8.6) scale(1.13) translate(-7.5 -8.6)"><path d="M1.4 12.3Q7 9.5 13.2 5" fill="none" stroke="#8c8c8c" stroke-width="0.85"/><path d="M2.7 6.6Q4.6 3.4 7.4 4.2" fill="none" stroke="#8c8c8c" stroke-width="0.85"/><path d="M7.4 4.2Q8.2 9.2 9.1 12.6" fill="none" stroke="#555" stroke-width="1.5" stroke-linecap="round"/><path d="M9.1 12.6Q10.8 14.4 13 10.9" fill="none" stroke="#8c8c8c" stroke-width="0.85"/><circle cx="1.5" cy="12.1" r="1.05" fill="#4c4c4c"/><circle cx="13.2" cy="5.2" r="1.05" fill="#4c4c4c"/></g></svg></div>
<div class="tx" style="left:96.2px;top:251.7px"><span>Wheel Omega - Front-left</span></div>
<div class="icw" style="left:74px;top:271px"><svg class="ic" width="16" height="16" viewBox="0 0 16 16"><g transform="translate(7.5 8.6) scale(1.13) translate(-7.5 -8.6)"><path d="M1.4 12.3Q7 9.5 13.2 5" fill="none" stroke="#8c8c8c" stroke-width="0.85"/><path d="M2.7 6.6Q4.6 3.4 7.4 4.2" fill="none" stroke="#8c8c8c" stroke-width="0.85"/><path d="M7.4 4.2Q8.2 9.2 9.1 12.6" fill="none" stroke="#555" stroke-width="1.5" stroke-linecap="round"/><path d="M9.1 12.6Q10.8 14.4 13 10.9" fill="none" stroke="#8c8c8c" stroke-width="0.85"/><circle cx="1.5" cy="12.1" r="1.05" fill="#4c4c4c"/><circle cx="13.2" cy="5.2" r="1.05" fill="#4c4c4c"/></g></svg></div>
<div class="tx" style="left:96.2px;top:269.7px"><span>Wheel Omega - Front-right</span></div>
<div class="icw" style="left:74px;top:289px"><svg class="ic" width="16" height="16" viewBox="0 0 16 16"><g transform="translate(7.5 8.6) scale(1.13) translate(-7.5 -8.6)"><path d="M1.4 12.3Q7 9.5 13.2 5" fill="none" stroke="#8c8c8c" stroke-width="0.85"/><path d="M2.7 6.6Q4.6 3.4 7.4 4.2" fill="none" stroke="#8c8c8c" stroke-width="0.85"/><path d="M7.4 4.2Q8.2 9.2 9.1 12.6" fill="none" stroke="#555" stroke-width="1.5" stroke-linecap="round"/><path d="M9.1 12.6Q10.8 14.4 13 10.9" fill="none" stroke="#8c8c8c" stroke-width="0.85"/><circle cx="1.5" cy="12.1" r="1.05" fill="#4c4c4c"/><circle cx="13.2" cy="5.2" r="1.05" fill="#4c4c4c"/></g></svg></div>
<div class="tx" style="left:96.2px;top:287.7px"><span>Wheel Omega - Rear-left</span></div>
<div class="icw" style="left:74px;top:307px"><svg class="ic" width="16" height="16" viewBox="0 0 16 16"><g transform="translate(7.5 8.6) scale(1.13) translate(-7.5 -8.6)"><path d="M1.4 12.3Q7 9.5 13.2 5" fill="none" stroke="#8c8c8c" stroke-width="0.85"/><path d="M2.7 6.6Q4.6 3.4 7.4 4.2" fill="none" stroke="#8c8c8c" stroke-width="0.85"/><path d="M7.4 4.2Q8.2 9.2 9.1 12.6" fill="none" stroke="#555" stroke-width="1.5" stroke-linecap="round"/><path d="M9.1 12.6Q10.8 14.4 13 10.9" fill="none" stroke="#8c8c8c" stroke-width="0.85"/><circle cx="1.5" cy="12.1" r="1.05" fill="#4c4c4c"/><circle cx="13.2" cy="5.2" r="1.05" fill="#4c4c4c"/></g></svg></div>
<div class="tx" style="left:96.2px;top:305.7px"><span>Wheel Omega - Rear-right</span></div>
<div class="icw" style="left:74px;top:325px"><svg class="ic" width="16" height="16" viewBox="0 0 16 16"><g transform="translate(7.5 8.6) scale(1.13) translate(-7.5 -8.6)"><path d="M1.4 12.3Q7 9.5 13.2 5" fill="none" stroke="#8c8c8c" stroke-width="0.85"/><path d="M2.7 6.6Q4.6 3.4 7.4 4.2" fill="none" stroke="#8c8c8c" stroke-width="0.85"/><path d="M7.4 4.2Q8.2 9.2 9.1 12.6" fill="none" stroke="#555" stroke-width="1.5" stroke-linecap="round"/><path d="M9.1 12.6Q10.8 14.4 13 10.9" fill="none" stroke="#8c8c8c" stroke-width="0.85"/><circle cx="1.5" cy="12.1" r="1.05" fill="#4c4c4c"/><circle cx="13.2" cy="5.2" r="1.05" fill="#4c4c4c"/></g></svg></div>
<div class="tx" style="left:96.2px;top:323.7px"><span>FMU Output - Modulated Throttle</span></div>
<div class="icw" style="left:74px;top:343px"><svg class="ic" width="16" height="16" viewBox="0 0 16 16"><g transform="translate(7.5 8.6) scale(1.13) translate(-7.5 -8.6)"><path d="M1.4 12.3Q7 9.5 13.2 5" fill="none" stroke="#8c8c8c" stroke-width="0.85"/><path d="M2.7 6.6Q4.6 3.4 7.4 4.2" fill="none" stroke="#8c8c8c" stroke-width="0.85"/><path d="M7.4 4.2Q8.2 9.2 9.1 12.6" fill="none" stroke="#555" stroke-width="1.5" stroke-linecap="round"/><path d="M9.1 12.6Q10.8 14.4 13 10.9" fill="none" stroke="#8c8c8c" stroke-width="0.85"/><circle cx="1.5" cy="12.1" r="1.05" fill="#4c4c4c"/><circle cx="13.2" cy="5.2" r="1.05" fill="#4c4c4c"/></g></svg></div>
<div class="tx" style="left:96.2px;top:341.7px"><span>FMU Output - Vehicle Long. Vel. (Estimated)</span></div>
<div class="icw" style="left:74px;top:361px"><svg class="ic" width="16" height="16" viewBox="0 0 16 16"><g transform="translate(7.5 8.6) scale(1.13) translate(-7.5 -8.6)"><path d="M1.4 12.3Q7 9.5 13.2 5" fill="none" stroke="#8c8c8c" stroke-width="0.85"/><path d="M2.7 6.6Q4.6 3.4 7.4 4.2" fill="none" stroke="#8c8c8c" stroke-width="0.85"/><path d="M7.4 4.2Q8.2 9.2 9.1 12.6" fill="none" stroke="#555" stroke-width="1.5" stroke-linecap="round"/><path d="M9.1 12.6Q10.8 14.4 13 10.9" fill="none" stroke="#8c8c8c" stroke-width="0.85"/><circle cx="1.5" cy="12.1" r="1.05" fill="#4c4c4c"/><circle cx="13.2" cy="5.2" r="1.05" fill="#4c4c4c"/></g></svg></div>
<div class="tx" style="left:96.2px;top:359.7px"><span>FMU Output - Max. wheel slip (Estimated)</span></div>
</div>
<div class="frame" style="left:2px;top:3px;width:328px;height:424px"></div>
<div class="frame" style="left:399px;top:21px;width:348px;height:370px"></div>
</body></html>
